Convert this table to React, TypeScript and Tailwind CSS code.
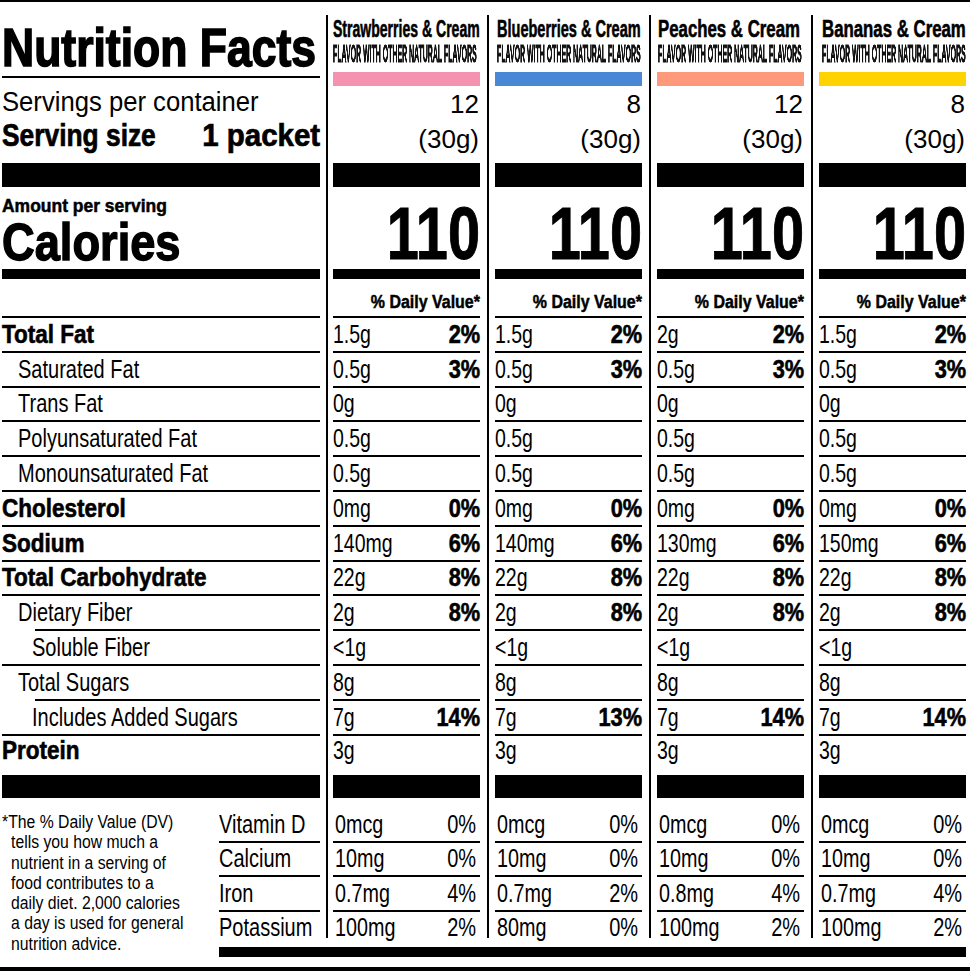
import React from "react";

type Flavor = {
  name: string;
  nameCls: string;
  headPad: string;
  barCls: string;
  servings: string;
  vals: [string, string][];
  protein: string;
  vit: [string, string][];
};

const flavors: Flavor[] = [
  {
    name: "Strawberries & Cream",
    nameCls: "scale-x-[0.585]",
    headPad: "pl-0",
    barCls: "bg-[#f592b2]",
    servings: "12",
    vals: [
      ["1.5g", "2%"], ["0.5g", "3%"], ["0g", ""], ["0.5g", ""], ["0.5g", ""], ["0mg", "0%"],
      ["140mg", "6%"], ["22g", "8%"], ["2g", "8%"], ["<1g", ""], ["8g", ""], ["7g", "14%"],
    ],
    protein: "3g",
    vit: [["0mcg", "0%"], ["10mg", "0%"], ["0.7mg", "4%"], ["100mg", "2%"]],
  },
  {
    name: "Blueberries & Cream",
    nameCls: "scale-x-[0.605]",
    headPad: "pl-[2px]",
    barCls: "bg-[#4a88d6]",
    servings: "8",
    vals: [
      ["1.5g", "2%"], ["0.5g", "3%"], ["0g", ""], ["0.5g", ""], ["0.5g", ""], ["0mg", "0%"],
      ["140mg", "6%"], ["22g", "8%"], ["2g", "8%"], ["<1g", ""], ["8g", ""], ["7g", "13%"],
    ],
    protein: "3g",
    vit: [["0mcg", "0%"], ["10mg", "0%"], ["0.7mg", "2%"], ["80mg", "0%"]],
  },
  {
    name: "Peaches & Cream",
    nameCls: "scale-x-[0.70]",
    headPad: "pl-[1px]",
    barCls: "bg-[#fe9a7b]",
    servings: "12",
    vals: [
      ["2g", "2%"], ["0.5g", "3%"], ["0g", ""], ["0.5g", ""], ["0.5g", ""], ["0mg", "0%"],
      ["130mg", "6%"], ["22g", "8%"], ["2g", "8%"], ["<1g", ""], ["8g", ""], ["7g", "14%"],
    ],
    protein: "3g",
    vit: [["0mcg", "0%"], ["10mg", "0%"], ["0.8mg", "4%"], ["100mg", "2%"]],
  },
  {
    name: "Bananas & Cream",
    nameCls: "scale-x-[0.70]",
    headPad: "pl-[3px]",
    barCls: "bg-[#ffd300]",
    servings: "8",
    vals: [
      ["1.5g", "2%"], ["0.5g", "3%"], ["0g", ""], ["0.5g", ""], ["0.5g", ""], ["0mg", "0%"],
      ["150mg", "6%"], ["22g", "8%"], ["2g", "8%"], ["<1g", ""], ["8g", ""], ["7g", "14%"],
    ],
    protein: "3g",
    vit: [["0mcg", "0%"], ["10mg", "0%"], ["0.7mg", "4%"], ["100mg", "2%"]],
  },
];

const rows: { label: string; bold: boolean; pad: string; lineCls: string }[] = [
  { label: "Total Fat", bold: true, pad: "pl-0", lineCls: "ml-0" },
  { label: "Saturated Fat", bold: false, pad: "pl-[16px]", lineCls: "ml-0" },
  { label: "Trans Fat", bold: false, pad: "pl-[16px]", lineCls: "ml-0" },
  { label: "Polyunsaturated Fat", bold: false, pad: "pl-[16px]", lineCls: "ml-0" },
  { label: "Monounsaturated Fat", bold: false, pad: "pl-[16px]", lineCls: "ml-0" },
  { label: "Cholesterol", bold: true, pad: "pl-0", lineCls: "ml-0" },
  { label: "Sodium", bold: true, pad: "pl-0", lineCls: "ml-0" },
  { label: "Total Carbohydrate", bold: true, pad: "pl-0", lineCls: "ml-0" },
  { label: "Dietary Fiber", bold: false, pad: "pl-[16px]", lineCls: "ml-[33px]" },
  { label: "Soluble Fiber", bold: false, pad: "pl-[30px]", lineCls: "ml-0" },
  { label: "Total Sugars", bold: false, pad: "pl-[16px]", lineCls: "ml-[33px]" },
  { label: "Includes Added Sugars", bold: false, pad: "pl-[30px]", lineCls: "ml-0" },
];

const vitLabels = ["Vitamin D", "Calcium", "Iron", "Potassium"];

const footLines = [
  "*The % Daily Value (DV)",
  "tells you how much a",
  "nutrient in a serving of",
  "food contributes to a",
  "daily diet. 2,000 calories",
  "a day is used for general",
  "nutrition advice.",
];

function Divider({ cls }: { cls: string }) {
  return (
    <div className={`flex shrink-0 justify-center ${cls}`}>
      <div className="w-[2px] bg-black" />
    </div>
  );
}

function LeftTop() {
  return (
    <div className="flex w-[318px] shrink-0 flex-col">
      <div className="flex h-[76px] shrink-0 border-b-2 border-black pt-[19px]">
        <span className="h-[53px] origin-left scale-x-[0.84] whitespace-nowrap text-[53px] font-bold leading-none [-webkit-text-stroke:1.6px_black]">
          Nutrition Facts
        </span>
      </div>
      <div className="flex h-[85px] shrink-0 flex-col pt-[11px]">
        <div className="flex h-[27px]">
          <span className="origin-left scale-x-[0.95] whitespace-nowrap text-[27px] leading-none">
            Servings per container
          </span>
        </div>
        <div className="mt-[4px] flex h-[31px] justify-between">
          <span className="origin-left scale-x-[0.85] whitespace-nowrap text-[31px] font-bold leading-none [-webkit-text-stroke:0.7px_black]">
            Serving size
          </span>
          <span className="origin-right scale-x-[0.95] whitespace-nowrap text-[31px] font-bold leading-none [-webkit-text-stroke:0.7px_black]">
            1 packet
          </span>
        </div>
      </div>
      <div className="h-[24px] shrink-0 bg-black" />
      <div className="flex h-[82px] shrink-0 flex-col pt-[10px]">
        <div className="flex h-[19px]">
          <span className="origin-left scale-x-[0.97] whitespace-nowrap text-[18px] font-bold leading-none [-webkit-text-stroke:0.5px_black]">
            Amount per serving
          </span>
        </div>
        <div className="flex h-[52px]">
          <span className="origin-left scale-x-[0.87] whitespace-nowrap text-[52px] font-bold leading-none [-webkit-text-stroke:1.4px_black]">
            Calories
          </span>
        </div>
      </div>
      <div className="h-[10px] shrink-0 bg-black" />
      <div className="h-[39px] shrink-0 border-b-2 border-black" />
      {rows.map((r) => (
        <div key={r.label} className="flex h-[34.8px] shrink-0 flex-col">
          <div className={`flex h-[32.8px] items-center ${r.pad}`}>
            <span
              className={
                r.bold
                  ? "origin-left scale-x-[0.9] whitespace-nowrap text-[25px] font-bold leading-none [-webkit-text-stroke:0.6px_black]"
                  : "origin-left scale-x-[0.8] whitespace-nowrap text-[25px] leading-none"
              }
            >
              {r.label}
            </span>
          </div>
          <div className={`h-[2px] bg-black ${r.lineCls}`} />
        </div>
      ))}
      <div className="flex h-[39.4px] shrink-0 items-start pt-[2px]">
        <span className="origin-left scale-x-[0.9] whitespace-nowrap text-[25px] font-bold leading-none [-webkit-text-stroke:0.6px_black]">
          Protein
        </span>
      </div>
      <div className="h-[23px] shrink-0 bg-black" />
    </div>
  );
}

function FlavorTop({ f }: { f: Flavor }) {
  return (
    <div className="flex w-[147px] shrink-0 flex-col">
      <div className={`flex h-[70px] shrink-0 flex-col pt-[15px] ${f.headPad}`}>
        <div className="flex h-[25px]">
          <span className={`origin-left whitespace-nowrap text-[24px] font-bold leading-none [-webkit-text-stroke:0.6px_black] ${f.nameCls}`}>
            {f.name}
          </span>
        </div>
        <div className="flex h-[24px]">
          <span className="origin-left scale-x-[0.29] whitespace-nowrap text-[24px] font-bold leading-none text-[#111] will-change-transform [-webkit-text-stroke:1px_#111]">
            FLAVOR WITH OTHER NATURAL FLAVORS
          </span>
        </div>
      </div>
      <div className={`h-[14px] shrink-0 ${f.barCls}`} />
      <div className="flex h-[77px] shrink-0 flex-col items-end pr-[1px] pt-[5px]">
        <span className="h-[26px] whitespace-nowrap text-[26px] leading-none">{f.servings}</span>
        <span className="mt-[9px] h-[26px] whitespace-nowrap text-[26px] leading-none">(30g)</span>
      </div>
      <div className="h-[24px] shrink-0 bg-black" />
      <div className="flex h-[82px] shrink-0 justify-end pt-[16px]">
        <span className="h-[60px] origin-right scale-x-[0.77] whitespace-nowrap text-[75px] font-bold leading-[60px] [-webkit-text-stroke:1px_black]">
          110
        </span>
      </div>
      <div className="h-[10px] shrink-0 bg-black" />
      <div className="flex h-[39px] shrink-0 justify-end border-b-2 border-black pt-[13px]">
        <span className="h-[19px] origin-right scale-x-[0.84] whitespace-nowrap text-[19px] font-bold leading-none [-webkit-text-stroke:0.5px_black]">
          % Daily Value*
        </span>
      </div>
      {f.vals.map(([v, p], i) => (
        <div key={i} className="flex h-[34.8px] shrink-0 flex-col">
          <div className="flex h-[32.8px] items-center justify-between">
            <span className="origin-left scale-x-[0.78] whitespace-nowrap text-[25px] leading-none">{v}</span>
            {p ? (
              <span className="origin-right scale-x-[0.87] whitespace-nowrap text-[25px] font-bold leading-none [-webkit-text-stroke:0.6px_black]">
                {p}
              </span>
            ) : null}
          </div>
          <div className="h-[2px] bg-black" />
        </div>
      ))}
      <div className="flex h-[39.4px] shrink-0 items-start pt-[2px]">
        <span className="origin-left scale-x-[0.78] whitespace-nowrap text-[25px] leading-none">{f.protein}</span>
      </div>
      <div className="h-[23px] shrink-0 bg-black" />
    </div>
  );
}

function VitLabels() {
  return (
    <div className="flex w-[101px] shrink-0 flex-col pt-[10px]">
      {vitLabels.slice(0, 3).map((l) => (
        <div key={l} className="flex h-[34.5px] shrink-0 flex-col">
          <div className="flex h-[32.5px] items-center">
            <span className="origin-left scale-x-[0.8] whitespace-nowrap text-[25px] leading-none">{l}</span>
          </div>
          <div className="h-[2px] bg-black" />
        </div>
      ))}
      <div className="flex h-[26.5px] shrink-0 items-start pt-[3px]">
        <span className="origin-left scale-x-[0.8] whitespace-nowrap text-[25px] leading-none">{vitLabels[3]}</span>
      </div>
    </div>
  );
}

function VitCol({ f }: { f: Flavor }) {
  return (
    <div className="flex w-[147px] shrink-0 flex-col pt-[10px]">
      {f.vit.slice(0, 3).map(([v, p], i) => (
        <div key={i} className="flex h-[34.5px] shrink-0 flex-col">
          <div className="flex h-[32.5px] items-center justify-between pl-[2px] pr-[4px]">
            <span className="origin-left scale-x-[0.79] whitespace-nowrap text-[25px] leading-none">{v}</span>
            <span className="origin-right scale-x-[0.8] whitespace-nowrap text-[25px] leading-none">{p}</span>
          </div>
          <div className="h-[2px] bg-black" />
        </div>
      ))}
      <div className="flex h-[26.5px] shrink-0 items-start justify-between pl-[2px] pr-[4px] pt-[3px]">
        <span className="origin-left scale-x-[0.79] whitespace-nowrap text-[25px] leading-none">{f.vit[3][0]}</span>
        <span className="origin-right scale-x-[0.8] whitespace-nowrap text-[25px] leading-none">{f.vit[3][1]}</span>
      </div>
    </div>
  );
}

export default function App() {
  return (
    <div className="h-[971px] w-[970px] overflow-hidden border-t-2 border-b-4 border-black bg-white font-['Liberation_Sans',Arial,sans-serif] text-black">
      <div className="flex h-[796px] pl-[2px]">
        <LeftTop />
        <Divider cls="w-[13px] pt-[13px]" />
        <FlavorTop f={flavors[0]} />
        <Divider cls="w-[15px] pt-[13px]" />
        <FlavorTop f={flavors[1]} />
        <Divider cls="w-[15px] pt-[13px]" />
        <FlavorTop f={flavors[2]} />
        <Divider cls="w-[15px] pt-[13px]" />
        <FlavorTop f={flavors[3]} />
      </div>
      <div className="flex h-[169px] pl-[2px]">
        <div className="flex w-[217px] shrink-0 flex-col pt-[14px]">
          {footLines.map((l, i) => (
            <div key={i} className={`flex h-[20.3px] shrink-0 ${i === 0 ? "pl-0" : "pl-[9px]"}`}>
              <span className="origin-left scale-x-[0.9] whitespace-nowrap text-[17.5px] leading-[20.3px]">{l}</span>
            </div>
          ))}
        </div>
        <div className="flex w-[747px] shrink-0 flex-col">
          <div className="flex h-[140px] shrink-0">
            <VitLabels />
            <Divider cls="w-[13px]" />
            <VitCol f={flavors[0]} />
            <Divider cls="w-[15px]" />
            <VitCol f={flavors[1]} />
            <Divider cls="w-[15px]" />
            <VitCol f={flavors[2]} />
            <Divider cls="w-[15px]" />
            <VitCol f={flavors[3]} />
          </div>
          <div className="h-[9px] shrink-0" />
          <div className="h-[10px] shrink-0 bg-black" />
        </div>
      </div>
    </div>
  );
}
